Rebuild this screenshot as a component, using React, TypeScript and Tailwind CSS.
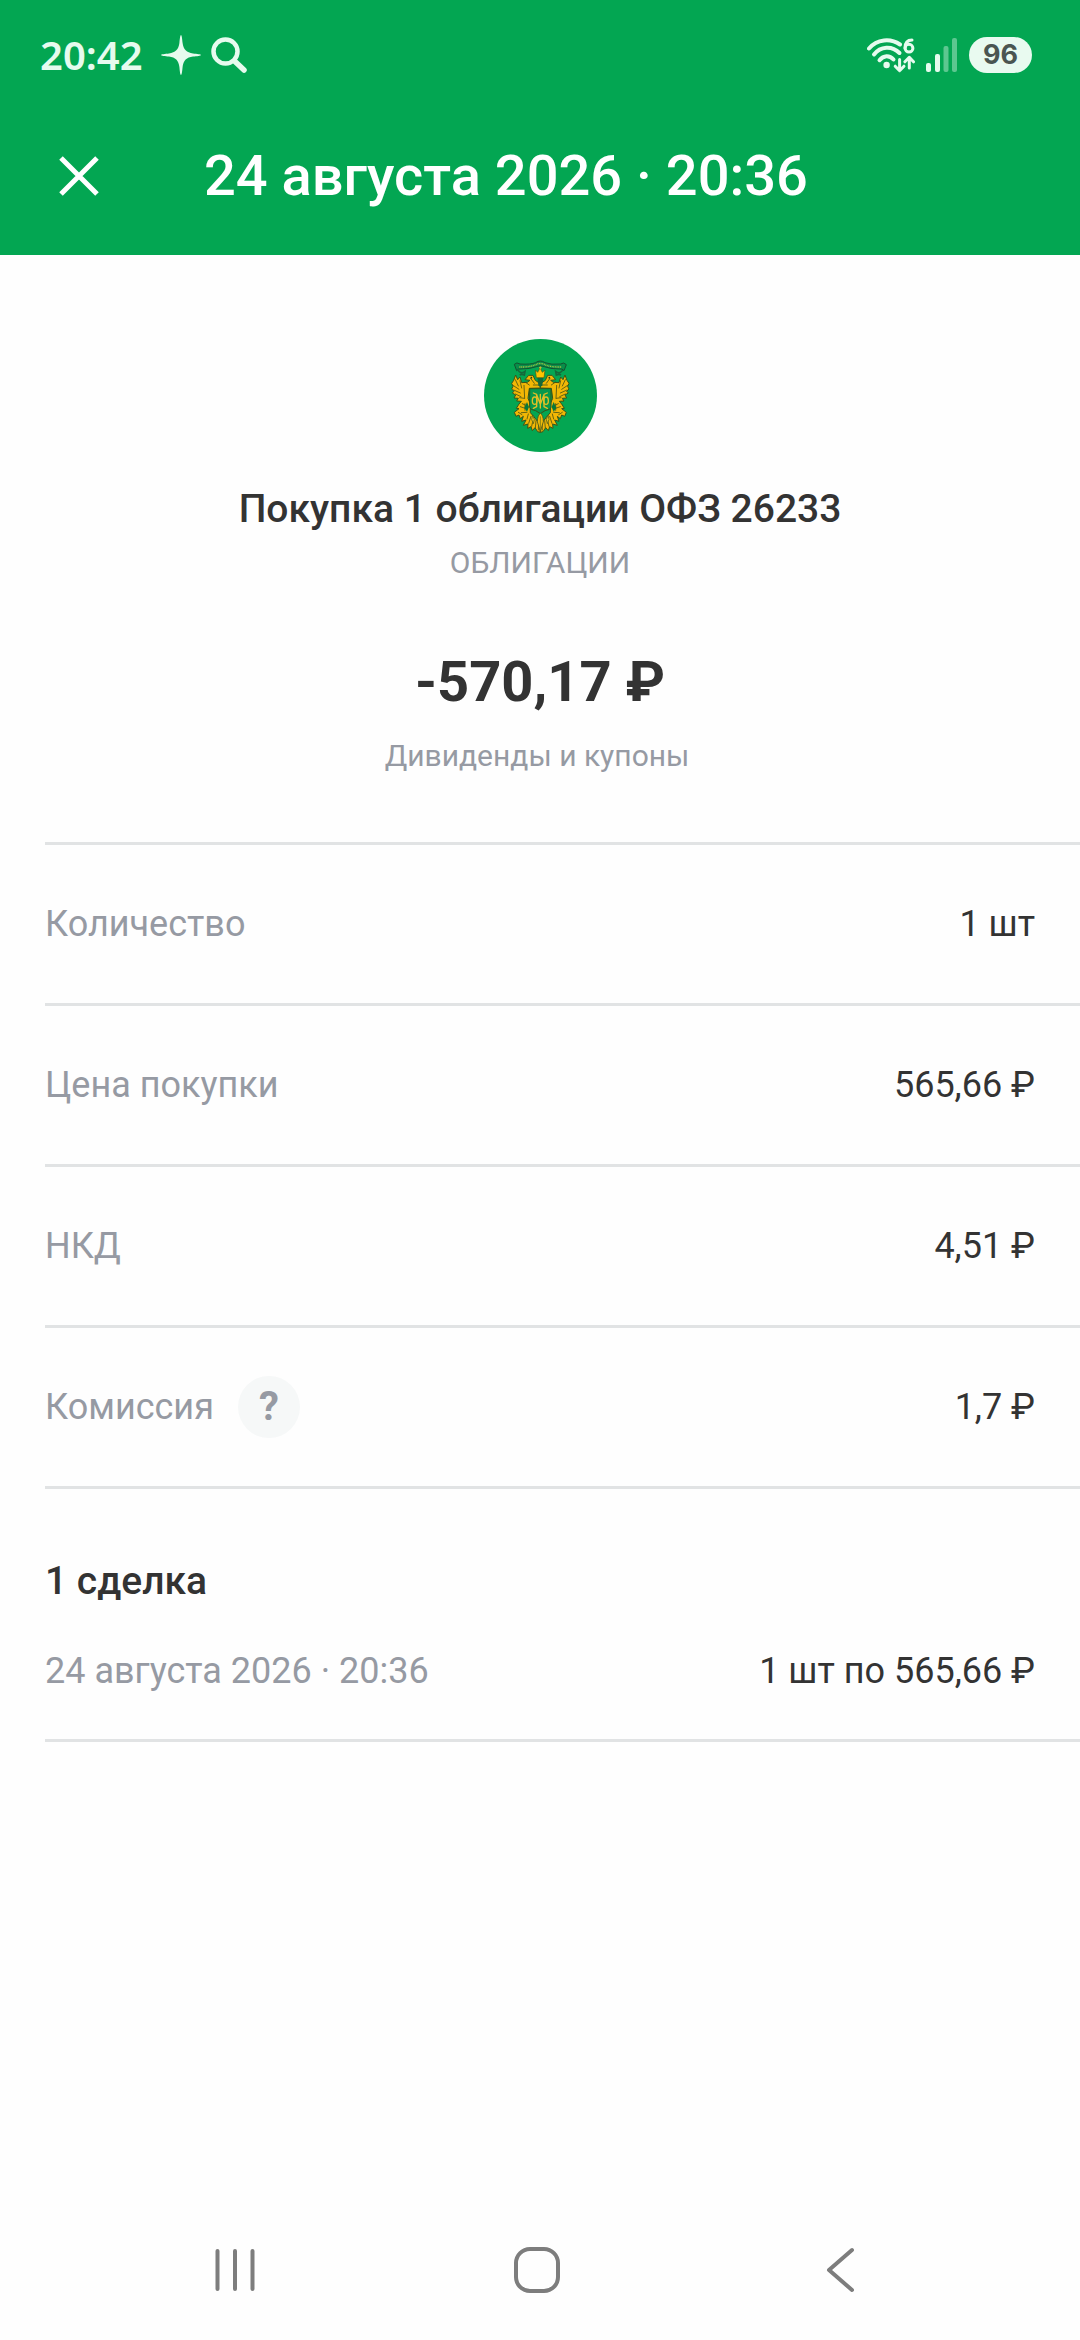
import type { ReactNode } from "react";

function SparkleIcon() {
  return (
    <svg className="h-10 w-10" viewBox="0 0 40 40" aria-hidden="true">
      <path
        d="M20 0C20.800 0 21.200 4 21.600 8C22.400 14.400 25.600 17.600 32 18.400C36 18.800 40 19.200 40 20C40 20.800 36 21.200 32 21.600C25.600 22.400 22.400 25.600 21.600 32C21.200 36 20.800 40 20 40C19.200 40 18.800 36 18.400 32C17.600 25.600 14.400 22.400 8 21.600C4 21.200 0 20.800 0 20C0 19.200 4 18.800 8 18.400C14.400 17.600 17.600 14.400 18.400 8C18.800 4 19.200 0 20 0Z"
        fill="#e6fbee"
      />
    </svg>
  );
}

function SearchIcon() {
  return (
    <svg className="h-9 w-9" viewBox="0 0 36 36" fill="none" stroke="#e6fbee" aria-hidden="true">
      <circle cx="14.500" cy="14.500" r="12" strokeWidth="4.500" />
      <path d="M23.500 24L33 33" strokeWidth="5.500" strokeLinecap="round" />
    </svg>
  );
}

function WifiIcon() {
  return (
    <svg className="h-9 w-12" viewBox="0 0 48 36" fill="none" stroke="#e6fbee" aria-hidden="true">
      <g strokeWidth="4" strokeLinecap="round">
        <path d="M2 11.500C10 2 23.500 1 33 7.500" />
        <path d="M7 17.500C13.500 9 25 8.500 32.500 16" />
        <path d="M12.500 23.200C16.500 18 22.500 17.800 26.500 22.500" />
      </g>
      <circle cx="19.600" cy="28" r="3.200" fill="#e6fbee" stroke="none" />
      <g strokeWidth="3" strokeLinecap="round" strokeLinejoin="round">
        <path d="M32.600 22.500V33.500M28.200 29.200L32.600 33.700L37 29.200" />
        <path d="M42.300 31V20.500M37.900 24.800L42.300 20.300L46.500 24.800" />
        <circle cx="42" cy="11.200" r="3.900" />
        <path d="M38 11C38 5.500 40.500 3 45 3" />
      </g>
    </svg>
  );
}

function SignalIcon() {
  return (
    <svg className="h-[34px] w-8" viewBox="0 0 32 34" fill="#e6fbee" aria-hidden="true">
      <rect x="0" y="25" width="5" height="9" rx="2" />
      <rect x="9" y="16" width="5" height="18" rx="2" />
      <rect x="17.500" y="8" width="5" height="26" rx="2" opacity=".4" />
      <rect x="26" y="0" width="5" height="34" rx="2" opacity=".4" />
    </svg>
  );
}

function EmblemHalf() {
  return (
    <g>
      <path
        d="M172 172L155 173L150 156L143 164L137 150L131 166L125 175L129 184L125 192L132 199L127 204L137 210L132 219L145 220L140 228L154 229L147 237L139 250L147 251L133 262L138 274L147 270L151 281L160 274L155 289L168 285L160 301L174 297L173 310L183 305L187 317L195 308L203 320L211 322V300L190 273L181 263L180 234L174 220L178 190L211 189V176L196 166L189 151L176 151L165 164L180 166Z"
        fill="#f2b705"
        stroke="#3b5318"
        strokeWidth="3"
        strokeLinejoin="round"
      />
      <g fill="none" stroke="#4b5414" strokeWidth="2.500" strokeLinecap="round">
        <path d="M136 164L145 183M129 181L147 193M131 195L151 204M136 207L153 215M150 167L155 189M162 181L164 220M149 218L163 220" />
        <path d="M157 236L169 242M151 245L171 252M154 263L171 262M145 262L156 269M165 236V256" />
        <path d="M175 267L171 282M183 274L176 295M190 281L185 304M198 287L196 309M206 291L205 315" />
        <path d="M182 160L193 175M190 180H207M165 171L178 180" />
      </g>
      <path d="M171 231L177 246L171 260L163 248Z" fill="#08783a" />
      <path d="M188 270Q181 284 190 296Q197 284 188 270Z" fill="#e9bd19" stroke="#3b5318" strokeWidth="2" />
      <circle cx="184" cy="158" r="2.500" fill="#193e22" />
    </g>
  );
}

function Emblem() {
  return (
    <svg className="h-[113px] w-[113px]" viewBox="42 42 339 339" role="img" aria-label="Эмблема ОФЗ">
      <circle cx="211.500" cy="211.500" r="169.500" fill="#04a652" />
      <EmblemHalf />
      <g transform="translate(422 0) scale(-1 1)">
        <EmblemHalf />
      </g>
      <path d="M179 191H243V247Q241 255 225 257L211 266L197 257Q181 255 179 247Z" fill="#08984c" stroke="#365418" strokeWidth="3" />
      <g fill="none" stroke="#e3bf25" strokeWidth="4" strokeLinecap="round" strokeLinejoin="round">
        <path d="M190 204L200 208V245L190 250M232 204L222 208V245L232 250M200 209L211 238L222 209M211 208V249" />
        <ellipse cx="194" cy="227" rx="7" ry="11" />
        <ellipse cx="228" cy="227" rx="7" ry="11" />
      </g>
      <path d="M196 135L203 142L210 129L217 142L225 135L222 158H199Z" fill="#ffc400" stroke="#4b5715" strokeWidth="2" />
      <path d="M211 124V133M207 128H215" stroke="#d5b42c" strokeWidth="3" />
      <path d="M202 159H220L217 181L211 187L205 181Z" fill="#16683a" />
      <path
        d="M133 118Q140 110 150 117Q182 119 197 113Q211 103 225 113Q243 120 272 117Q281 110 289 119L282 137Q277 130 268 132Q240 132 223 125Q211 119 199 125Q181 132 153 132Q144 130 140 137Z"
        fill="#088e49"
        stroke="#15502f"
        strokeWidth="3"
      />
      <path d="M148 126Q181 127 199 118Q211 113 223 118Q241 127 274 126" fill="none" stroke="#a9bd42" strokeWidth="4" strokeDasharray="3 2" />
      <path d="M144 135Q151 149 165 139L163 150Q155 146 149 150M278 135Q271 149 257 139L259 150Q267 146 273 150" fill="none" stroke="#15683a" strokeWidth="5" />
      <path d="M202 290Q203 270 211 265Q220 270 220 290L211 320Z" fill="#f0bc0b" stroke="#45551a" strokeWidth="2.500" />
      <path d="M211 274V316" stroke="#536019" strokeWidth="2" />
    </svg>
  );
}

function DetailRow({ label, value, extra }: { label: string; value: string; extra?: ReactNode }) {
  return (
    <div className="flex h-[161px] items-center justify-between border-b-[3px] border-[#e1e3e4] pr-[45px]">
      <dt className="flex items-center gap-6 text-[#969aa3]">
        {label}
        {extra}
      </dt>
      <dd>{value}</dd>
    </div>
  );
}

export default function App() {
  return (
    <div className="flex min-h-screen flex-col bg-[#fefefe] font-[Roboto,sans-serif] text-[36px] leading-[44px] text-[#333333]">
      <header className="bg-[#03a652] text-white">
        <div className="flex h-[97px] items-center justify-between pt-3 pr-12 pl-10 text-[#e6fbee]">
          <div className="flex items-center">
            <time className="font-['Noto_Sans',sans-serif] text-[40px] leading-[48px] font-semibold">20:42</time>
            <div className="ml-[18px] flex items-center gap-[10px]">
              <SparkleIcon />
              <SearchIcon />
            </div>
          </div>
          <div className="flex items-center gap-[11px]">
            <WifiIcon />
            <SignalIcon />
            <span className="flex h-9 w-[63px] items-center justify-center rounded-full bg-[#e9faf0] font-[Inter,sans-serif] text-[27px] leading-9 font-bold text-[#4a5551]">
              96
            </span>
          </div>
        </div>
        <div className="flex h-[158px] items-center gap-20 pl-[34px]">
          <button type="button" aria-label="Закрыть" className="flex h-[90px] w-[90px] items-center justify-center">
            <svg className="h-10 w-10" viewBox="0 0 40 40" fill="none" stroke="currentColor" strokeWidth="5" aria-hidden="true">
              <path d="M2 2L38 38M38 2L2 38" />
            </svg>
          </button>
          <h1 className="text-[56px] leading-[64px] font-medium">24 августа 2026 · 20:36</h1>
        </div>
      </header>

      <main className="flex grow flex-col">
        <section className="flex flex-col items-center pt-[84px] text-center">
          <Emblem />
          <h2 className="mt-[33px] text-[39px] leading-[48px] font-medium">Покупка 1 облигации ОФЗ 26233</h2>
          <p className="mt-[10px] text-[30px] leading-[40px] text-[#969aa3]">ОБЛИГАЦИИ</p>
          <p className="mt-[67px] text-[56px] leading-[64px] font-bold">-570,17 ₽</p>
          <p className="mt-[22px] pr-[6px] text-[30px] leading-[40px] text-[#969aa3]">Дивиденды и купоны</p>
        </section>

        <dl className="mt-[66px] ml-[45px] border-t-[3px] border-[#e1e3e4]">
          <DetailRow label="Количество" value="1 шт" />
          <DetailRow label="Цена покупки" value="565,66 ₽" />
          <DetailRow label="НКД" value="4,51 ₽" />
          <DetailRow
            label="Комиссия"
            value="1,7 ₽"
            extra={
              <button
                type="button"
                aria-label="О комиссии"
                className="flex h-[62px] w-[62px] items-center justify-center rounded-full bg-[#f6f8f8] text-[40px] font-bold"
              >
                ?
              </button>
            }
          />
        </dl>

        <section className="ml-[45px] border-b-[3px] border-[#e1e3e4] pt-[68px] pb-[46px]">
          <h3 className="text-[39px] leading-[48px] font-medium">1 сделка</h3>
          <div className="mt-11 flex items-center justify-between pr-[45px]">
            <time className="text-[#969aa3]">24 августа 2026 · 20:36</time>
            <span>1 шт по 565,66 ₽</span>
          </div>
        </section>
      </main>

      <nav className="grid h-[140px] grid-cols-3 pr-[90px] pl-[84px] text-[#7d7d7d]">
        <button type="button" aria-label="Недавние приложения" className="flex items-center justify-center">
          <svg className="h-12 w-12" viewBox="0 0 48 48" fill="none" stroke="currentColor" strokeWidth="4" strokeLinecap="round" aria-hidden="true">
            <path d="M6.500 5V43M24 5V43M41.500 5V43" />
          </svg>
        </button>
        <button type="button" aria-label="Главный экран" className="flex items-center justify-center">
          <svg className="h-12 w-12" viewBox="0 0 48 48" fill="none" stroke="currentColor" strokeWidth="4" aria-hidden="true">
            <rect x="3" y="3" width="42" height="42" rx="14" />
          </svg>
        </button>
        <button type="button" aria-label="Назад" className="flex items-center justify-center">
          <svg className="h-12 w-12" viewBox="0 0 48 48" fill="none" stroke="currentColor" strokeWidth="4" strokeLinecap="round" strokeLinejoin="round" aria-hidden="true">
            <path d="M37 4L14 24L37 44" />
          </svg>
        </button>
      </nav>
    </div>
  );
}
